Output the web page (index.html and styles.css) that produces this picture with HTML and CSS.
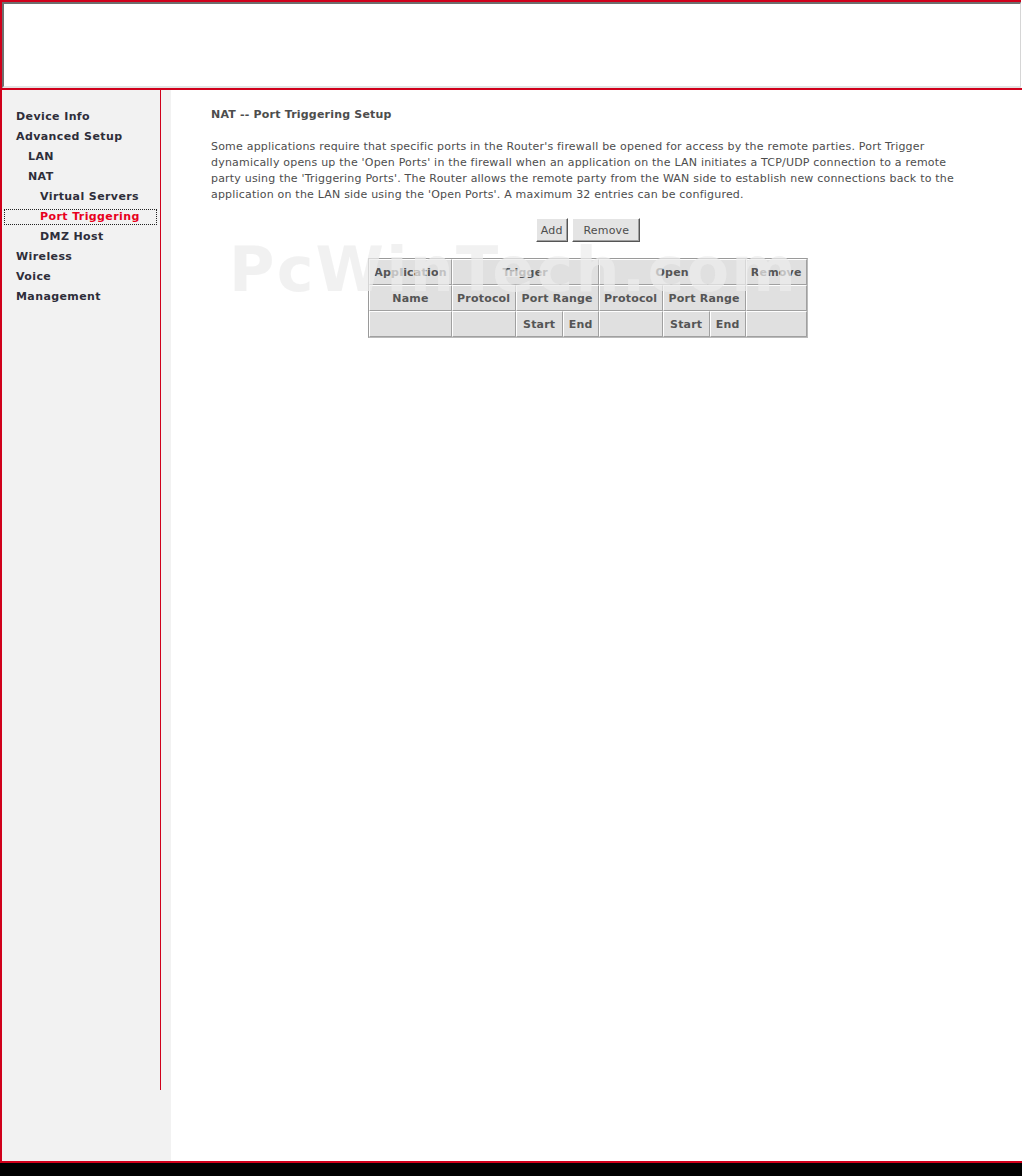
FILE: index.html
```html
<!DOCTYPE html>
<html lang="en">
<head>
    <meta charset="UTF-8">
    <title>NAT -- Port Triggering Setup</title>
    <link rel="stylesheet" href="styles.css">
</head>
<body>
    <!-- Top banner frame -->
    <div class="header">
        <div class="banner"></div>
    </div>

    <div class="main">
        <!-- Left menu -->
        <div class="sidebar">
            <ul class="menu">
                <li class="lvl0">Device Info</li>
                <li class="lvl0">Advanced Setup</li>
                <li class="lvl1">LAN</li>
                <li class="lvl1">NAT</li>
                <li class="lvl2">Virtual Servers</li>
                <li class="lvl2 active"><span>Port Triggering</span></li>
                <li class="lvl2">DMZ Host</li>
                <li class="lvl0">Wireless</li>
                <li class="lvl0">Voice</li>
                <li class="lvl0">Management</li>
            </ul>
        </div>

        <!-- Content -->
        <div class="content">
            <h1 class="title">NAT -- Port Triggering Setup</h1>
            <p class="intro">Some applications require that specific ports in the Router's firewall be opened for access by the remote parties. Port Trigger dynamically opens up the 'Open Ports' in the firewall when an application on the LAN initiates a TCP/UDP connection to a remote party using the 'Triggering Ports'. The Router allows the remote party from the WAN side to establish new connections back to the application on the LAN side using the 'Open Ports'. A maximum 32 entries can be configured.</p>

            <div class="buttons">
                <button class="btn btn-add">Add</button>
                <button class="btn btn-remove">Remove</button>
            </div>

            <div class="table-wrap">
                <table class="rules">
                    <tr>
                        <td class="c-app">Application</td>
                        <td colspan="3">Trigger</td>
                        <td colspan="3">Open</td>
                        <td class="c-rm">Remove</td>
                    </tr>
                    <tr>
                        <td>Name</td>
                        <td class="c-proto">Protocol</td>
                        <td colspan="2">Port Range</td>
                        <td class="c-proto">Protocol</td>
                        <td colspan="2">Port Range</td>
                        <td></td>
                    </tr>
                    <tr>
                        <td></td>
                        <td></td>
                        <td class="c-start">Start</td>
                        <td class="c-end">End</td>
                        <td></td>
                        <td class="c-start">Start</td>
                        <td class="c-end">End</td>
                        <td></td>
                    </tr>
                </table>
                <div class="watermark">PcWinTech.com</div>
            </div>
        </div>
    </div>

    <div class="footer"></div>
</body>
</html>
```

FILE: styles.css
```css
body {
    margin: 0;
    background: #fff;
    font-family: Tahoma, "DejaVu Sans", Verdana, sans-serif;
    font-size: 11px;
    letter-spacing: 0.2px;
    color: #4d4d4d;
}

/* Top Banner */
.header {
    width: 1019px;
    height: 86px;
    border-top: 2px solid #d0001b;
    border-left: 2px solid #d0001b;
}

.banner {
    height: 82px;
    background: #fff;
    border-top: 2px solid #6e6e6e;
    border-left: 2px solid #6e6e6e;
    border-right: 1px solid #d6d6d6;
    border-bottom: 2px solid #e3e3e3;
}

/* Main Layout */
.main {
    display: flex;
    height: 1071px;
    border-top: 2px solid #d0001b;
    border-bottom: 2px solid #d0001b;
    border-left: 2px solid #d0001b;
}

.sidebar {
    width: 169px;
    background: #f2f2f2;
}

.menu {
    list-style: none;
    margin: 0;
    padding: 17px 0 0 0;
    width: 158px;
    height: 983px;
    border-right: 1px solid #d0001b;
}

.menu li {
    height: 20px;
    line-height: 20px;
    font-weight: bold;
    font-size: 11px;
    letter-spacing: 0.4px;
    color: #2e2e3a;
    white-space: nowrap;
}

.menu .lvl0 { padding-left: 14px; }
.menu .lvl1 { padding-left: 26px; }
.menu .lvl2 { padding-left: 38px; }

.menu .active {
    color: #e8001c;
    margin: 2px 0 2px 2px;
    padding-left: 35px;
    height: 14px;
    line-height: 14px;
    border: 1px dotted #222;
    width: 116px;
}

.content {
    flex: 1;
    padding: 0 40px;
}

.title {
    margin: 17px 0 0 0;
    font-size: 11px;
    font-weight: bold;
    line-height: 16px;
    color: #4d4d4d;
}

.intro {
    margin: 16px 0 0 0;
    line-height: 16px;
    width: 760px;
}

.buttons {
    margin-top: 15px;
    width: 754px;
    text-align: center;
}

.btn {
    font-family: inherit;
    font-size: 11px;
    letter-spacing: 0.2px;
    color: #4d4d4d;
    background: #e4e4e4;
    height: 24px;
    margin: 0 1px;
    border: 1px solid;
    border-color: #fff #555 #555 #fff;
    box-shadow: inset -1px -1px 0 #a0a0a0;
}

.btn-add {
    width: 32px;
    padding: 0;
}

.btn-remove {
    width: 68px;
    padding: 0;
    margin-left: 0;
}

/* Port triggering table */
.table-wrap {
    position: relative;
    width: 754px;
    margin-top: 16px;
}

.rules {
    margin: 0 auto;
    border-collapse: separate;
    border-spacing: 0;
    border: 1px solid #9a9a9a;
    border-right-color: #bbb;
    border-bottom-color: #bbb;
    background: #e0e0e0;
}

.rules td {
    height: 24px;
    padding: 0 4px;
    text-align: center;
    font-weight: bold;
    color: #555;
    white-space: nowrap;
    border: 1px solid;
    border-color: #fff #a0a0a0 #a0a0a0 #fff;
}

.c-app { width: 71px; }
.c-proto { width: 54px; }
.c-start { width: 37px; }
.c-end { width: 26px; }
.c-rm { width: 51px; }

.watermark {
    position: absolute;
    left: 18px;
    top: -25px;
    font-family: "DejaVu Sans", sans-serif;
    font-size: 62px;
    font-weight: bold;
    letter-spacing: 2.2px;
    color: rgba(236, 236, 236, 0.72);
    pointer-events: none;
    white-space: nowrap;
}

/* Bottom bar */
.footer {
    height: 13px;
    background: #000;
}
```
